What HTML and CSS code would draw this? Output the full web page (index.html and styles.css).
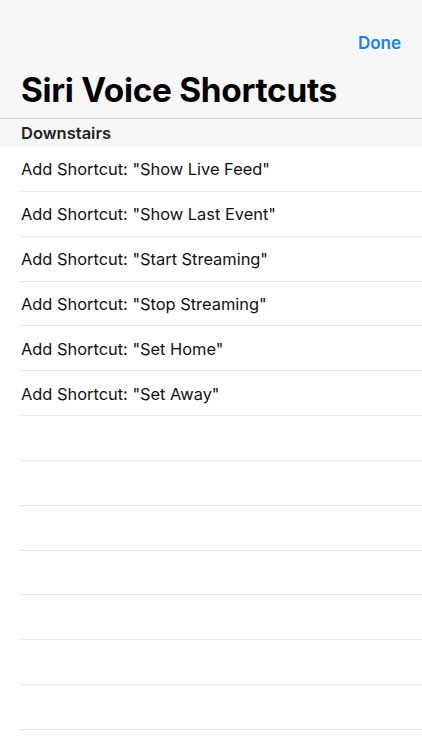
FILE: index.html
```html
<!DOCTYPE html>
<html lang="en">
<head>
<meta charset="utf-8">
<title>Siri Voice Shortcuts</title>
<link rel="stylesheet" href="styles.css">
</head>
<body>
<div class="screen">
  <header class="navbar">
    <div class="nav-top">
      <span class="done">Done</span>
    </div>
    <h1 class="title">Siri Voice Shortcuts</h1>
  </header>
  <div class="section-header">Downstairs</div>
  <ul class="list">
    <li class="row">Add Shortcut: "Show Live Feed"</li>
    <li class="row">Add Shortcut: "Show Last Event"</li>
    <li class="row">Add Shortcut: "Start Streaming"</li>
    <li class="row">Add Shortcut: "Stop Streaming"</li>
    <li class="row">Add Shortcut: "Set Home"</li>
    <li class="row">Add Shortcut: "Set Away"</li>
    <li class="row"></li>
    <li class="row"></li>
    <li class="row"></li>
    <li class="row"></li>
    <li class="row"></li>
    <li class="row"></li>
    <li class="row"></li>
    <li class="row"></li>
  </ul>
</div>
</body>
</html>
```
FILE: styles.css
```css
html, body {
  margin: 0;
  padding: 0;
  background: #ffffff;
}
body {
  font-family: Inter, "Noto Sans", sans-serif;
  color: #000;
  width: 422px;
  height: 750px;
  overflow: hidden;
}
.screen {
  display: flex;
  flex-direction: column;
}
.navbar {
  background: #f7f7f7;
  height: 118px;
  border-bottom: 1px solid #d6d6d6;
  display: flex;
  flex-direction: column;
}
.nav-top {
  height: 70px;
  display: flex;
  justify-content: flex-end;
  align-items: flex-start;
  padding: 33px 21px 0 0;
  box-sizing: border-box;
}
.done {
  color: #1a7fe8;
  font-size: 17px;
  font-weight: 600;
  line-height: 20px;
}
.title {
  margin: 0;
  padding-left: 21px;
  font-size: 33.4px;
  font-weight: 700;
  letter-spacing: -0.3px;
  line-height: 40px;
}
.section-header {
  background: #f7f7f7;
  height: 28px;
  display: flex;
  align-items: center;
  padding-left: 21px;
  font-size: 16.5px;
  font-weight: 600;
  color: #222;
}
.list {
  list-style: none;
  margin: 0;
  padding: 0 0 0 20px;
}
.row {
  height: 44.85px;
  box-sizing: border-box;
  border-bottom: 1px solid #e4e4e4;
  display: flex;
  align-items: center;
  padding-left: 1px;
  padding-top: 1px;
  font-size: 16.4px;
  color: #111;
}
```
